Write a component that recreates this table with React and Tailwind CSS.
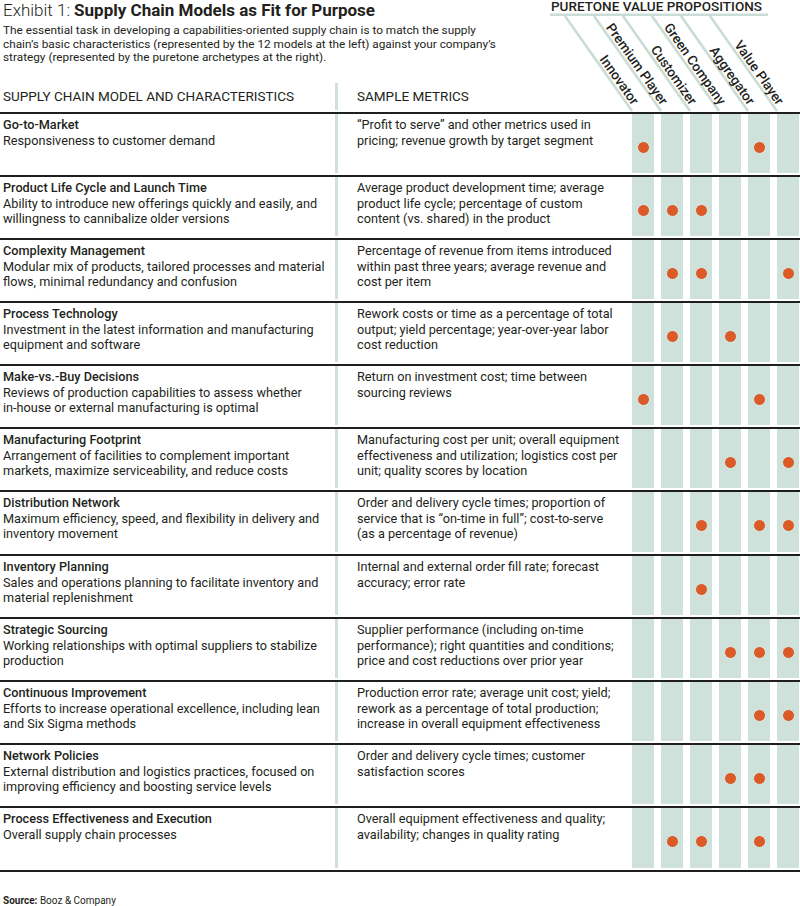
import React from "react";

const props = [
  "Innovator",
  "Premium Player",
  "Customizer",
  "Green Company",
  "Aggregator",
  "Value Player",
];

const rows = [
  {
    title: "Go-to-Market",
    desc: ["Responsiveness to customer demand"],
    metrics: ["“Profit to serve” and other metrics used in", "pricing; revenue growth by target segment"],
    dots: [1, 0, 0, 0, 1, 0],
  },
  {
    title: "Product Life Cycle and Launch Time",
    desc: ["Ability to introduce new offerings quickly and easily, and", "willingness to cannibalize older versions"],
    metrics: ["Average product development time; average", "product life cycle; percentage of custom", "content (vs. shared) in the product"],
    dots: [1, 1, 1, 0, 0, 0],
  },
  {
    title: "Complexity Management",
    desc: ["Modular mix of products, tailored processes and material", "flows, minimal redundancy and confusion"],
    metrics: ["Percentage of revenue from items introduced", "within past three years; average revenue and", "cost per item"],
    dots: [0, 1, 1, 0, 0, 1],
  },
  {
    title: "Process Technology",
    desc: ["Investment in the latest information and manufacturing", "equipment and software"],
    metrics: ["Rework costs or time as a percentage of total", "output; yield percentage; year-over-year labor", "cost reduction"],
    dots: [0, 1, 0, 1, 0, 0],
  },
  {
    title: "Make-vs.-Buy Decisions",
    desc: ["Reviews of production capabilities to assess whether", "in-house or external manufacturing is optimal"],
    metrics: ["Return on investment cost; time between", "sourcing reviews"],
    dots: [1, 0, 0, 0, 1, 0],
  },
  {
    title: "Manufacturing Footprint",
    desc: ["Arrangement of facilities to complement important", "markets, maximize serviceability, and reduce costs"],
    metrics: ["Manufacturing cost per unit; overall equipment", "effectiveness and utilization; logistics cost per", "unit; quality scores by location"],
    dots: [0, 0, 0, 1, 0, 1],
  },
  {
    title: "Distribution Network",
    desc: ["Maximum efficiency, speed, and flexibility in delivery and", "inventory movement"],
    metrics: ["Order and delivery cycle times; proportion of", "service that is “on-time in full”; cost-to-serve", "(as a percentage of revenue)"],
    dots: [0, 0, 1, 0, 1, 1],
  },
  {
    title: "Inventory Planning",
    desc: ["Sales and operations planning to facilitate inventory and", "material replenishment"],
    metrics: ["Internal and external order fill rate; forecast", "accuracy; error rate"],
    dots: [0, 0, 1, 0, 0, 0],
  },
  {
    title: "Strategic Sourcing",
    desc: ["Working relationships with optimal suppliers to stabilize", "production"],
    metrics: ["Supplier performance (including on-time", "performance); right quantities and conditions;", "price and cost reductions over prior year"],
    dots: [0, 0, 0, 1, 1, 1],
  },
  {
    title: "Continuous Improvement",
    desc: ["Efforts to increase operational excellence, including lean", "and Six Sigma methods"],
    metrics: ["Production error rate; average unit cost; yield;", "rework as a percentage of total production;", "increase in overall equipment effectiveness"],
    dots: [0, 0, 0, 0, 1, 1],
  },
  {
    title: "Network Policies",
    desc: ["External distribution and logistics practices, focused on", "improving efficiency and boosting service levels"],
    metrics: ["Order and delivery cycle times; customer", "satisfaction scores"],
    dots: [0, 0, 0, 1, 1, 0],
  },
  {
    title: "Process Effectiveness and Execution",
    desc: ["Overall supply chain processes"],
    metrics: ["Overall equipment effectiveness and quality;", "availability; changes in quality rating"],
    dots: [0, 1, 1, 0, 1, 0],
  },
];

// diagonal column heads, drawn in svg (x origin = 545px on the page)
const HeaderDiagonals = () => (
  <svg width="255" height="112" className="shrink-0 block">
    <text
      x="6"
      y="11"
      fontSize="13"
      fontWeight="500"
      fill="#231f20"
      textLength="211"
      lengthAdjust="spacingAndGlyphs"
      fontFamily="Roboto, sans-serif"
    >
      PURETONE VALUE PROPOSITIONS
    </text>
    <rect x="5" y="13.5" width="218" height="2.5" fill="#c9ddd6" />
    {props.map((p, i) => (
      <g key={p}>
        <line
          x1={20 + 29 * i}
          y1="16"
          x2={87 + 29 * i}
          y2="111"
          stroke="#c9ddd6"
          strokeWidth="2.6"
        />
        <text
          transform={`translate(${87 + 29 * i} 106) rotate(54.8)`}
          textAnchor="end"
          fontSize="13.5"
          fontWeight="500"
          fill="#231f20"
          fontFamily="Roboto, sans-serif"
        >
          {p}
        </text>
      </g>
    ))}
  </svg>
);

const Row = ({ row, tall }) => (
  <div className={`flex border-t-2 border-[#1f1f1f] ${tall ? "h-[64px]" : "h-[63px]"}`}>
    <div className="w-[335px] pl-[3px] pt-[3px] text-[12.7px] leading-[15.5px]">
      <div className="font-medium">{row.title}</div>
      {row.desc.map((d) => (
        <div key={d}>{d}</div>
      ))}
    </div>
    <div className="w-[3px] mb-[2px] bg-[#cfe1db]"></div>
    <div className="w-[294px] pl-[19px] pt-[3px] text-[12.7px] leading-[15.5px] whitespace-nowrap">
      {row.metrics.map((m) => (
        <div key={m}>{m}</div>
      ))}
    </div>
    <div className="flex gap-[7px] mb-[2px]">
      {row.dots.map((on, i) => (
        <div key={i} className="w-[22px] bg-[#cfe1db] flex justify-center">
          {on ? (
            <div className="mt-[27px] w-[13px] h-[13px] rounded-full bg-[#dc5a28] border border-[#d3f1ec]"></div>
          ) : null}
        </div>
      ))}
    </div>
  </div>
);

const App = () => {
  return (
    <div className="w-[800px] h-[906px] bg-white text-[#231f20] font-['Roboto',sans-serif] overflow-hidden">
      <div className="flex">
        <div className="w-[545px]">
          <div className="h-[83px] pl-[3px]">
            <div className="text-[17px] leading-[20px]">
              <span className="font-light">Exhibit 1: </span>
              <span className="font-bold">Supply Chain Models as Fit for Purpose</span>
            </div>
            <div className="mt-[4px] text-[11.8px] leading-[13.5px] whitespace-nowrap">
              The essential task in developing a capabilities-oriented supply chain is to match the supply
              <br />
              chain’s basic characteristics (represented by the 12 models at the left) against your company’s
              <br />
              strategy (represented by the puretone archetypes at the right).
            </div>
          </div>
          <div className="flex h-[27px] text-[13.5px]">
            <div className="w-[335px] pl-[3px] pt-[3px]">SUPPLY CHAIN MODEL AND CHARACTERISTICS</div>
            <div className="w-[3px] bg-[#cfe1db]"></div>
            <div className="pl-[19px] pt-[3px]">SAMPLE METRICS</div>
          </div>
        </div>
        <HeaderDiagonals />
      </div>

      <div className="border-b-2 border-[#1f1f1f]">
        {rows.map((r, i) => (
          <Row key={r.title} row={r} tall={i == 6 || i == 11} />
        ))}
      </div>

      <div className="mt-[23px] pl-[3px] text-[10px] leading-[12px]">
        <span className="font-bold">Source:</span> Booz &amp; Company
      </div>
    </div>
  );
};

export default App;
